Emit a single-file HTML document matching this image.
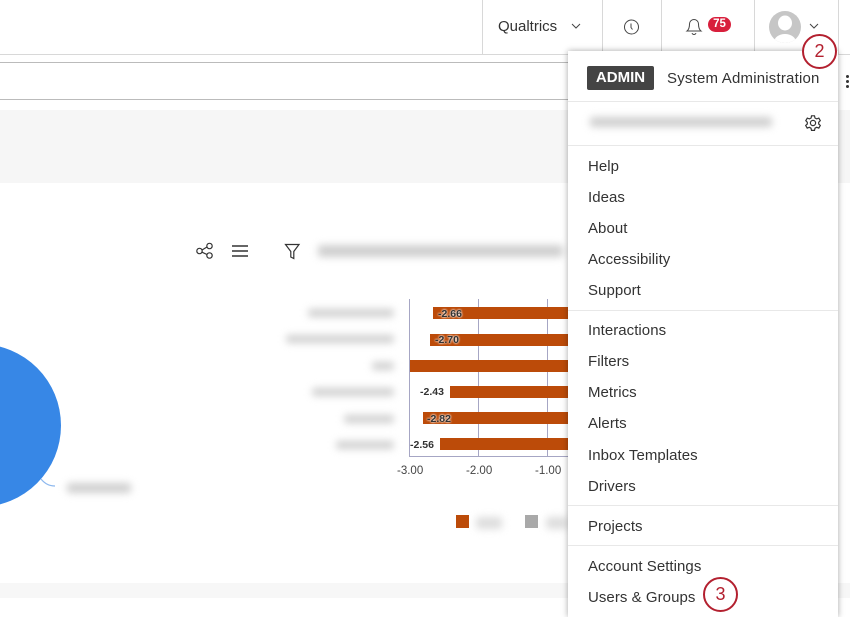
<!DOCTYPE html>
<html style="width:850px;height:617px;overflow:hidden"><head><meta charset="utf-8">
<style>
html,body{margin:0;padding:0;background:#fff}
body{width:850px;height:617px;position:relative;overflow:hidden;font-family:"Liberation Sans",sans-serif;color:#333}
.a{position:absolute}
.v{position:absolute;top:0;height:54px;width:1px;background:#d8d8d8}
.m{position:absolute;left:588px;font-size:15px;line-height:20px;color:#333;white-space:nowrap;letter-spacing:.05px}
.d{position:absolute;left:568px;width:270px;height:1px;background:#e8e8e8}
.b{position:absolute;background:#cfcfcf;filter:blur(4px);border-radius:3px}
.bar{position:absolute;height:12px;background:#bc4b09}
.l{position:absolute;font-size:10.500px;font-weight:bold;line-height:12px;color:#333;white-space:nowrap}
.g{position:absolute;top:299px;width:1px;height:157px;background:#a6a6c4}
.t{position:absolute;top:465px;font-size:11.500px;line-height:13px;color:#444;white-space:nowrap}
.c{position:absolute;box-sizing:border-box;border:2.500px solid #b3202f;border-radius:50%;background:#fff;color:#b3202f;text-align:center;font-size:18px}
</style></head><body>
<div class="a" style="left:0;top:54px;width:850px;height:1px;background:#d8d8d8"></div>
<div class="v" style="left:482px"></div><div class="v" style="left:602px"></div><div class="v" style="left:661px"></div><div class="v" style="left:754px"></div><div class="v" style="left:838px"></div>
<div class="a" style="left:498px;top:17px;font-size:15px;line-height:20px">Qualtrics</div>
<svg class="a" style="left:0;top:0" width="850" height="54" fill="none" stroke="#444" stroke-width="1">
<path d="M572 24l4 4 4-4"/>
<circle cx="631.500" cy="27" r="7"/><path d="M631 23.500v4l1.500 2"/>
<path d="M687 31c2-1.500 2.500-3.500 2.500-7a4.500 4.500 0 0 1 9 0c0 3.500.5 5.500 2.500 7zM692 33.200a2.200 2.200 0 0 0 4 0"/>
<path d="M810 24l4 4 4-4"/>
</svg>
<div class="a" style="left:708px;top:17px;width:23px;height:15px;border-radius:7.500px;background:#d81f3c;color:#fff;font-size:11.500px;font-weight:bold;line-height:15px;text-align:center">75</div>
<svg class="a" style="left:769px;top:11px" width="32" height="32"><defs><clipPath id="p"><circle cx="16" cy="16" r="16"/></clipPath></defs><circle cx="16" cy="16" r="16" fill="#c6c6c6"/><g clip-path="url(#p)" fill="#fff"><ellipse cx="16" cy="12" rx="7" ry="7.500"/><ellipse cx="16" cy="31" rx="11" ry="8"/></g></svg>

<div class="a" style="left:0;top:62px;width:568px;height:38px;box-sizing:border-box;border-top:1px solid #bbb;border-bottom:1px solid #bbb"></div>
<div class="a" style="left:0;top:110px;width:568px;height:73px;background:#f6f6f6"></div>
<div class="a" style="left:838px;top:110px;width:12px;height:73px;background:#f6f6f6"></div>
<div class="a" style="left:0;top:583px;width:568px;height:15px;background:#f7f7f7"></div>
<div class="a" style="left:838px;top:583px;width:12px;height:15px;background:#f7f7f7"></div>
<div class="a" style="left:846px;top:75px;width:3px;height:3px;border-radius:50%;background:#333;box-shadow:0 5px 0 #333,0 10px 0 #333"></div>

<svg class="a" style="left:195px;top:241px" width="56" height="20" fill="none" stroke="#333" stroke-width="1.200">
<circle cx="4.500" cy="10" r="2.700"/><circle cx="14.500" cy="5" r="2.700"/><circle cx="14.500" cy="14.500" r="2.700"/><path d="M7 9l5-3M7 11.200l5 2.300"/>
<path d="M37 5h16M37 10h16M37 15h16" stroke-width="1.400"/></svg>
<svg class="a" style="left:283px;top:241px" width="20" height="20" fill="none" stroke="#333" stroke-width="1.200"><path d="M2.500 3.500h13.500l-5.200 7v7l-3-1.500v-5.500z"/></svg>
<div class="b" style="left:318px;top:245px;width:245px;height:12px"></div>

<div class="a" style="left:-102px;top:344px;width:163px;height:163px;border-radius:50%;background:#3787e6"></div>
<svg class="a" style="left:36px;top:474px" width="22" height="16" fill="none" stroke="#8db8ee" stroke-width="1.200"><path d="M5 5c4 5 9 7 14 7"/></svg>
<div class="b" style="left:67px;top:483px;width:64px;height:10px"></div>

<div class="b" style="left:308px;top:309px;width:86px;height:8px"></div>
<div class="b" style="left:286px;top:335px;width:108px;height:8px"></div>
<div class="b" style="left:372px;top:362px;width:22px;height:8px"></div>
<div class="b" style="left:312px;top:388px;width:82px;height:8px"></div>
<div class="b" style="left:344px;top:415px;width:50px;height:8px"></div>
<div class="b" style="left:336px;top:441px;width:58px;height:8px"></div>

<div class="g" style="left:409px"></div><div class="g" style="left:478px"></div><div class="g" style="left:547px"></div>
<div class="a" style="left:409px;top:456px;width:159px;height:1px;background:#a6a6c4"></div>
<div class="bar" style="left:433px;top:307px;width:135px"></div>
<div class="bar" style="left:430px;top:334px;width:138px"></div>
<div class="bar" style="left:410px;top:360px;width:158px"></div>
<div class="bar" style="left:450px;top:386px;width:118px"></div>
<div class="bar" style="left:423px;top:412px;width:145px"></div>
<div class="bar" style="left:440px;top:438px;width:128px"></div>
<div class="l" style="left:438px;top:308px;text-shadow:0 0 2px #fff,0 0 2px #fff">-2.66</div>
<div class="l" style="left:435px;top:334px;text-shadow:0 0 2px #fff,0 0 2px #fff">-2.70</div>
<div class="l" style="left:420px;top:386px">-2.43</div>
<div class="l" style="left:427px;top:413px;text-shadow:0 0 2px #fff,0 0 2px #fff">-2.82</div>
<div class="l" style="left:410px;top:439px">-2.56</div>
<div class="t" style="left:397px">-3.00</div><div class="t" style="left:466px">-2.00</div><div class="t" style="left:535px">-1.00</div>
<div class="a" style="left:456px;top:515px;width:13px;height:13px;background:#bc4b09"></div>
<div class="b" style="left:476px;top:517px;width:26px;height:12px;background:#ddd"></div>
<div class="a" style="left:525px;top:515px;width:13px;height:13px;background:#a9a9a9"></div>
<div class="b" style="left:546px;top:517px;width:22px;height:12px;background:#ddd"></div>

<div class="a" style="left:568px;top:51px;width:270px;height:566px;background:#fff;box-shadow:0 0 6px rgba(0,0,0,.35)"></div>
<div class="a" style="left:587px;top:66px;width:67px;height:24px;background:#444;border-radius:2px;color:#fff;font-size:15px;font-weight:bold;line-height:24px;text-align:center">ADMIN</div>
<div class="m" style="left:667px;top:69px;letter-spacing:.2px">System Administration</div>
<div class="d" style="top:101px"></div>
<div class="b" style="left:590px;top:117px;width:182px;height:10px"></div>
<svg class="a" style="left:804px;top:114px" width="18" height="18" fill="none" stroke="#333" stroke-width="1.200"><path d="M7.500 1.800h3l.5 2.200 1.700.9 2.100-.8 1.500 2.600-1.600 1.500v1.800l1.600 1.500-1.500 2.600-2.100-.8-1.700.9-.5 2.200h-3l-.5-2.200-1.700-.9-2.100.8-1.500-2.600 1.600-1.500V8.200L1.800 6.700l1.500-2.600 2.100.8 1.700-.9z"/><circle cx="9" cy="9" r="2.600"/></svg>
<div class="d" style="top:145px"></div>
<div class="m" style="top:157px">Help</div>
<div class="m" style="top:188px">Ideas</div>
<div class="m" style="top:219px">About</div>
<div class="m" style="top:250px">Accessibility</div>
<div class="m" style="top:281px">Support</div>
<div class="d" style="top:310px"></div>
<div class="m" style="top:321px">Interactions</div>
<div class="m" style="top:352px">Filters</div>
<div class="m" style="top:383px">Metrics</div>
<div class="m" style="top:414px">Alerts</div>
<div class="m" style="top:446px">Inbox Templates</div>
<div class="m" style="top:477px">Drivers</div>
<div class="d" style="top:505px"></div>
<div class="m" style="top:517px">Projects</div>
<div class="d" style="top:545px"></div>
<div class="m" style="top:557px">Account Settings</div>
<div class="m" style="top:588px">Users &amp; Groups</div>
<div class="c" style="left:802px;top:34px;width:35px;height:35px;line-height:30px">2</div>
<div class="c" style="left:703px;top:577px;width:35px;height:35px;line-height:30px">3</div>
</body></html>
